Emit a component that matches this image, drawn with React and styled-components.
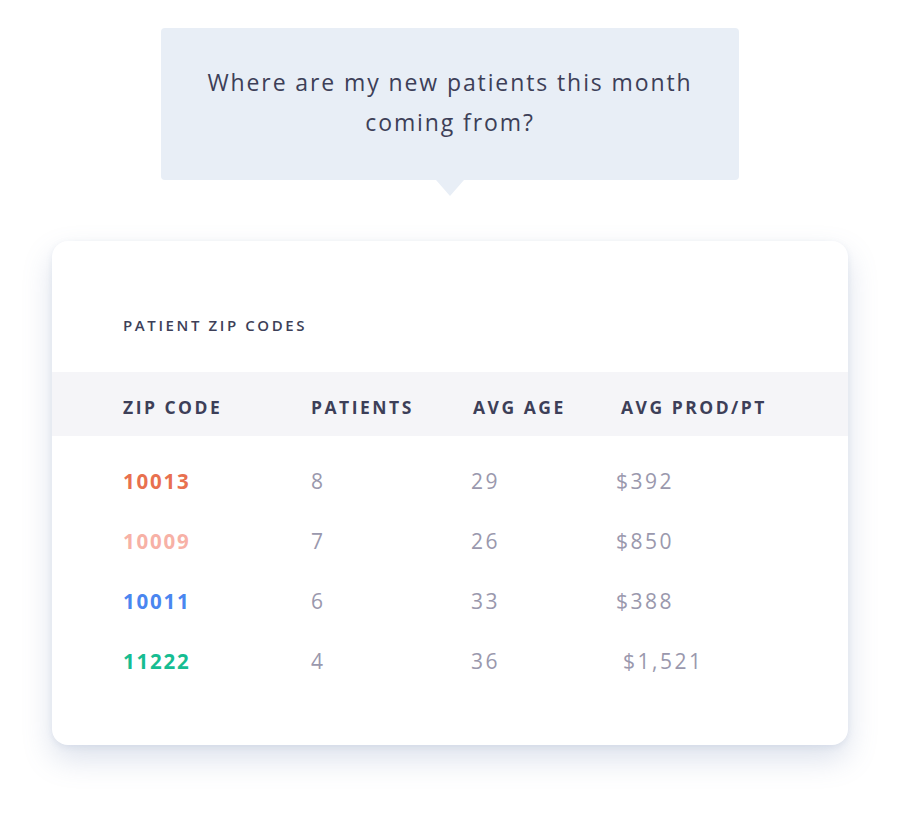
import React from "react";
import styled, { createGlobalStyle } from "styled-components";

const Global = createGlobalStyle`
  html, body { margin: 0; padding: 0; background: #ffffff; }
  body { font-family: "Open Sans", "Noto Sans", sans-serif; -webkit-font-smoothing: antialiased; }
`;

const Page = styled.div`
  width: 900px;
  min-height: 816px;
  padding-top: 28px;
  box-sizing: border-box;
  display: flex;
  flex-direction: column;
  align-items: center;
`;

const Bubble = styled.div`
  position: relative;
  width: 578px;
  height: 152px;
  box-sizing: border-box;
  background: #e8eef6;
  border-radius: 4px;
  display: flex;
  align-items: center;
  justify-content: center;
  text-align: center;
  padding: 0 10px 4px;
  color: #3d3f58;
  font-size: 23px;
  line-height: 40px;
  letter-spacing: 1.9px;
  &::after {
    content: "";
    position: absolute;
    left: 50%;
    bottom: -16px;
    transform: translateX(-50%);
    border-left: 14px solid transparent;
    border-right: 14px solid transparent;
    border-top: 16px solid #e8eef6;
  }
`;

const Card = styled.div`
  margin-top: 61px;
  width: 796px;
  height: 504px;
  box-sizing: border-box;
  background: #ffffff;
  border-radius: 16px;
  box-shadow: 0 14px 30px rgba(110, 130, 175, 0.24), 0 2px 6px rgba(110, 130, 175, 0.12);
  padding-top: 75px;
`;

const Title = styled.div`
  padding-left: 71px;
  font-size: 15px;
  line-height: 18px;
  letter-spacing: 2.6px;
  font-weight: 600;
  color: #3d3f58;
`;

const HeaderBand = styled.div`
  margin-top: 38px;
  height: 64px;
  box-sizing: border-box;
  padding-top: 6px;
  background: #f5f5f8;
  display: grid;
  grid-template-columns: 188px 162px 148px 1fr;
  align-items: center;
  padding-left: 71px;
`;

const HeadCell = styled.div`
  font-size: 17.5px;
  font-weight: 700;
  letter-spacing: 2.5px;
  color: #3d3f58;
  white-space: nowrap;
`;

const Body = styled.div`
  padding-top: 15px;
`;

const Row = styled.div`
  height: 60px;
  display: grid;
  grid-template-columns: 188px 160px 145px 1fr;
  align-items: center;
  padding-left: 71px;
`;

const Zip = styled.div`
  font-size: 20.5px;
  font-weight: 700;
  letter-spacing: 1.8px;
  color: ${(p) => p.$color};
`;

const Val = styled.div`
  font-size: 21px;
  letter-spacing: 2.5px;
  color: #9a98ad;
  padding-left: ${(p) => p.$shift || 0}px;
`;

const rows = [
  { zip: "10013", color: "#e8704f", pts: "8", age: "29", prod: "$392" },
  { zip: "10009", color: "#f7b1a6", pts: "7", age: "26", prod: "$850" },
  { zip: "10011", color: "#4a86f0", pts: "6", age: "33", prod: "$388" },
  { zip: "11222", color: "#16bd92", pts: "4", age: "36", prod: "$1,521", shift: 7 },
];

export default function App() {
  return (
    <>
      <Global />
      <Page>
        <Bubble>
          Where are my new patients this month
          <br />
          coming from?
        </Bubble>
        <Card>
          <Title>PATIENT ZIP CODES</Title>
          <HeaderBand>
            <HeadCell>ZIP CODE</HeadCell>
            <HeadCell>PATIENTS</HeadCell>
            <HeadCell>AVG AGE</HeadCell>
            <HeadCell>AVG PROD/PT</HeadCell>
          </HeaderBand>
          <Body>
            {rows.map((r) => (
              <Row key={r.zip}>
                <Zip $color={r.color}>{r.zip}</Zip>
                <Val>{r.pts}</Val>
                <Val>{r.age}</Val>
                <Val $shift={r.shift}>{r.prod}</Val>
              </Row>
            ))}
          </Body>
        </Card>
      </Page>
    </>
  );
}
